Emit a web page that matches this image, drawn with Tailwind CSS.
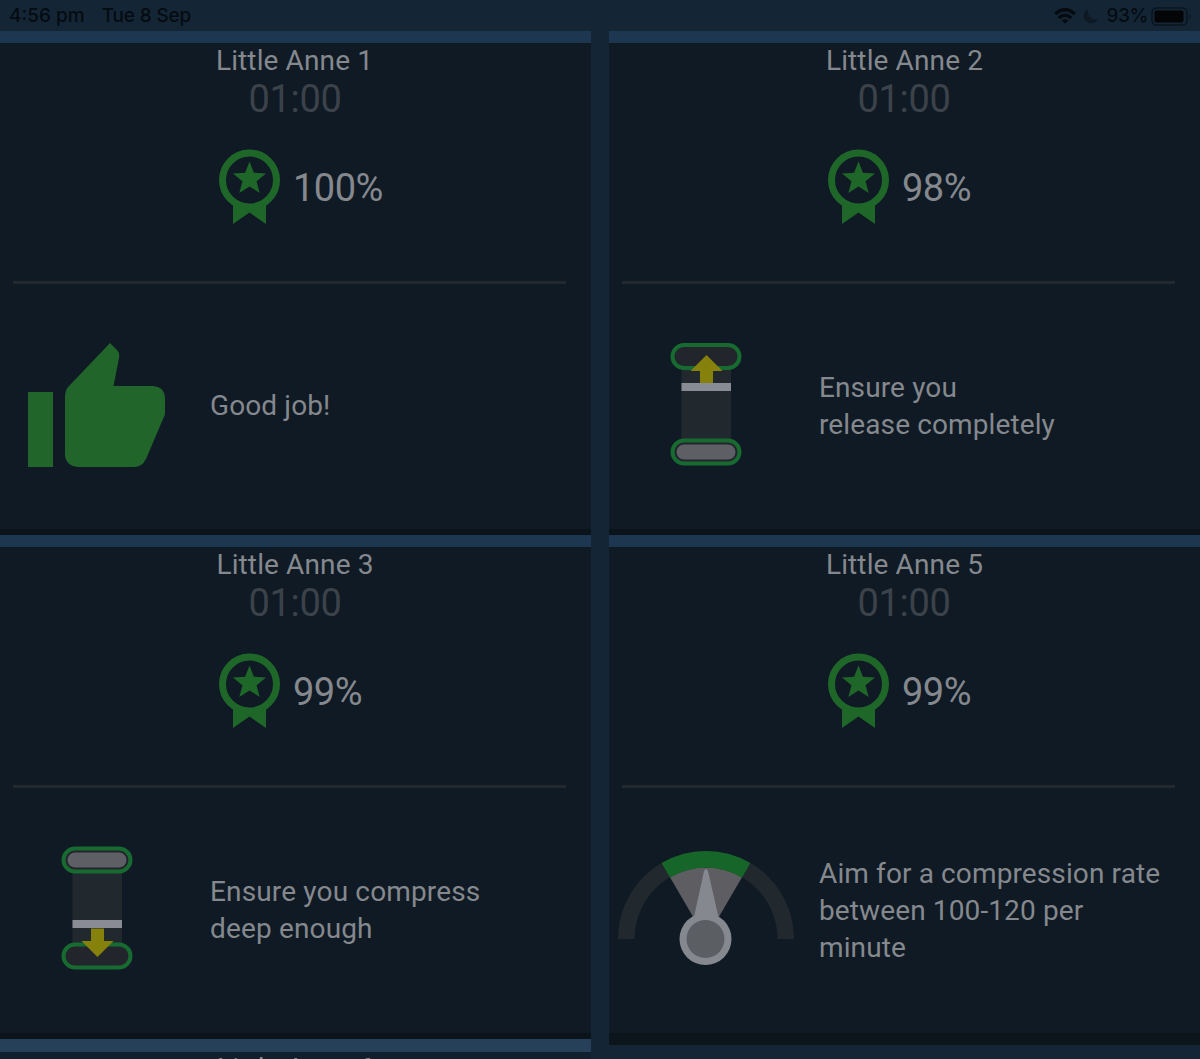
<!DOCTYPE html>
<html lang="en">
<head>
    <meta charset="UTF-8">
    <meta name="viewport" content="width=device-width, initial-scale=1.0">
    <title>CPR Results</title>
    <script src="https://cdn.jsdelivr.net/npm/@tailwindcss/browser@4"></script>
</head>
<body class="w-[1200px] h-[1059px] overflow-hidden bg-[#142635] text-[#85888d] font-['Roboto',sans-serif]">
    <!-- shared icons -->
    <svg class="hidden">
        <symbol id="award" viewBox="0 0 62 76">
            <path d="M14 52 H47 V75 L30.5 63.500 L14 75 Z" fill="#1f6729"/>
            <circle cx="30.500" cy="31" r="27" fill="#0f1a25" stroke="#1f6729" stroke-width="7"/>
            <path d="M30.500 12.500 L34.900 23.800 L47 24.500 L37.500 32.200 L40.700 44 L30.500 37.400 L20.300 44 L23.500 32.200 L14 24.500 L26.100 23.800 Z" fill="#1f6729"/>
        </symbol>
    </svg>

    <header class="h-[31px] pt-px flex items-center justify-between pl-[9px] pr-[8px] text-[19px] font-medium text-[#050b11] font-['Inter','Liberation_Sans',sans-serif]">
        <div class="flex gap-[17px]">
            <span>4:56 pm</span>
            <span class="tracking-[-0.15px]">Tue 8 Sep</span>
        </div>
        <div class="flex items-center">
            <svg class="w-[22px] h-[16px]" viewBox="0 0 22 16" fill="none" stroke="#050b11" stroke-width="3.500">
                <path d="M1.200 6 Q11 -2.800 20.800 6"/>
                <path d="M4.700 10 Q11 4.600 17.300 10"/>
                <path d="M11 15.500 L7.700 12.400 Q11 10 14.300 12.400 Z" fill="#050b11" stroke="none"/>
            </svg>
            <svg class="w-[16px] h-[16px] ml-[7px]" viewBox="0 0 16 16"><path d="M5 1 A7.500 7.500 0 1 0 15 11 A8 8 0 0 1 5 1 Z" fill="#0d1a24"/></svg>
            <span class="ml-[7px] tracking-[-0.4px]">93%</span>
            <svg class="w-[41px] h-[19px] ml-[3px]" viewBox="0 0 41 19">
                <rect x="1" y="1" width="35" height="17" rx="4.500" fill="none" stroke="#0a141d" stroke-width="1.500"/>
                <rect x="3.500" y="3.500" width="29" height="12" rx="2" fill="#040506"/>
                <path d="M38.500 6.500 Q40.500 9.500 38.500 12.500 Z" fill="#0a141d"/>
            </svg>
        </div>
    </header>

    <main class="grid grid-cols-2 gap-x-[18px]">
        <section class="h-[504px] flex flex-col bg-[#0f1a25] border-t-[12px] border-t-[#1c374f] border-b-[6px] border-b-[#0c141b]">
            <h2 class="pt-px h-[34px] leading-[34px] text-[28px] tracking-[0.12px] text-center pr-[2px]">Little Anne 1</h2>
            <p class="h-[44px] leading-[44px] text-[38px] tracking-[-0.3px] text-center text-[#3c4249] pr-[1px]">01:00</p>
            <div class="mt-[28px] pl-[219px] flex items-center h-[76px]">
                <svg class="w-[62px] h-[76px]"><use href="#award"/></svg>
                <span class="pt-[2px] ml-[12px] text-[38px] leading-[44px] tracking-[-0.5px]">100%</span>
            </div>
            <hr class="mt-[56px] ml-[13px] w-[553px] border-t-[3px] border-[#23282d]">
            <div class="flex-1 flex items-center pb-[3px]">
                <div class="w-[193px] flex justify-center">
                    <svg class="w-[138px] h-[125px]" viewBox="0 0 138 125" fill="#21652b">
                        <path d="M0 49 H25 V124 H0 Z"/>
                        <path d="M82 0 L89 7 Q92 10 91 15 L85.500 43 H125 Q137 44 137 56 V70 Q137 73 135 76 L118 116 Q114 124 106 124 H50 Q38 123 37 112 V54 Q37 46 42 42 Z"/>
                    </svg>
                </div>
                <p class="pl-[17px] text-[28px] leading-[37px] tracking-[0.12px]">Good job!</p>
            </div>
        </section>

        <section class="h-[504px] flex flex-col bg-[#0f1a25] border-t-[12px] border-t-[#1c374f] border-b-[6px] border-b-[#0c141b]">
            <h2 class="pt-px h-[34px] leading-[34px] text-[28px] tracking-[0.12px] text-center">Little Anne 2</h2>
            <p class="h-[44px] leading-[44px] text-[38px] tracking-[-0.3px] text-center text-[#3c4249] pr-[1px]">01:00</p>
            <div class="mt-[28px] pl-[219px] flex items-center h-[76px]">
                <svg class="w-[62px] h-[76px]"><use href="#award"/></svg>
                <span class="pt-[2px] ml-[12px] text-[38px] leading-[44px] tracking-[-0.5px]">98%</span>
            </div>
            <hr class="mt-[56px] ml-[13px] w-[553px] border-t-[3px] border-[#23282d]">
            <div class="flex-1 flex items-center pb-[1px]">
                <div class="w-[193px] flex justify-center pb-[4px]">
                    <svg class="w-[72px] h-[124px]" viewBox="0 0 72 124">
                        <rect x="11.500" y="22" width="49.500" height="78" fill="#22292e"/>
                        <rect x="2.500" y="3" width="67" height="23" rx="11.500" fill="#22262c" stroke="#176b30" stroke-width="4"/>
                        <rect x="11.500" y="41" width="49.500" height="8" fill="#898c94"/>
                        <path d="M36.500 13 L52.500 29 H43 V41 H30 V29 H20.500 Z" fill="#85810a"/>
                        <rect x="2.500" y="98.500" width="67" height="23" rx="11.500" fill="#22262c" stroke="#176b30" stroke-width="4"/>
                        <rect x="6.500" y="102.500" width="59" height="15" rx="7.500" fill="#5d5f65"/>
                    </svg>
                </div>
                <p class="pl-[17px] text-[28px] leading-[37px] tracking-[0.12px]">Ensure you<br>release completely</p>
            </div>
        </section>

        <section class="h-[504px] flex flex-col bg-[#0f1a25] border-t-[12px] border-t-[#1c374f] border-b-[6px] border-b-[#0c141b]">
            <h2 class="pt-px h-[34px] leading-[34px] text-[28px] tracking-[0.12px] text-center pr-[1px]">Little Anne 3</h2>
            <p class="h-[44px] leading-[44px] text-[38px] tracking-[-0.3px] text-center text-[#3c4249] pr-[1px]">01:00</p>
            <div class="mt-[28px] pl-[219px] flex items-center h-[76px]">
                <svg class="w-[62px] h-[76px]"><use href="#award"/></svg>
                <span class="pt-[2px] ml-[12px] text-[38px] leading-[44px] tracking-[-0.5px]">99%</span>
            </div>
            <hr class="mt-[56px] ml-[13px] w-[553px] border-t-[3px] border-[#23282d]">
            <div class="flex-1 flex items-center pb-[1px]">
                <div class="w-[193px] flex justify-center pb-[4px]">
                    <svg class="w-[72px] h-[124px]" viewBox="0 0 72 124">
                        <rect x="11.500" y="24" width="49.500" height="76" fill="#22292e"/>
                        <rect x="2.500" y="2.500" width="67" height="23" rx="11.500" fill="#22262c" stroke="#176b30" stroke-width="4"/>
                        <rect x="6.500" y="6.500" width="59" height="15" rx="7.500" fill="#5d5f65"/>
                        <rect x="2.500" y="98.500" width="67" height="23" rx="11.500" fill="#22262c" stroke="#176b30" stroke-width="4"/>
                        <rect x="11.500" y="74" width="49.500" height="8" fill="#898c94"/>
                        <path d="M36.500 111 L52.500 95 H43 V82.500 H30 V95 H20.500 Z" fill="#85810a"/>
                    </svg>
                </div>
                <p class="pl-[17px] text-[28px] leading-[37px] tracking-[0.15px]">Ensure you compress<br>deep enough</p>
            </div>
        </section>

        <section class="h-[510px] flex flex-col bg-[#0f1a25] border-t-[12px] border-t-[#1c374f] border-b-[12px] border-b-[#0d151c]">
            <h2 class="pt-px h-[34px] leading-[34px] text-[28px] tracking-[0.12px] text-center">Little Anne 5</h2>
            <p class="h-[44px] leading-[44px] text-[38px] tracking-[-0.3px] text-center text-[#3c4249] pr-[1px]">01:00</p>
            <div class="mt-[28px] pl-[219px] flex items-center h-[76px]">
                <svg class="w-[62px] h-[76px]"><use href="#award"/></svg>
                <span class="pt-[2px] ml-[12px] text-[38px] leading-[44px] tracking-[-0.5px]">99%</span>
            </div>
            <hr class="mt-[56px] ml-[13px] w-[553px] border-t-[3px] border-[#23282d]">
            <div class="flex-1 flex items-center pb-[1px]">
                <div class="w-[193px] flex justify-center pb-[4px]">
                    <svg class="w-[176px] h-[115px]" viewBox="0 0 176 115">
                        <path d="M0 88 A88 88 0 0 1 176 88 H159.500 A71.500 71.500 0 0 0 16.500 88 Z" fill="#22292e"/>
                        <path d="M88 88 L52 26.200 A71.500 71.500 0 0 1 124 26.200 Z" fill="#5d5d62"/>
                        <path d="M43.600 12.100 A88 88 0 0 1 132.400 12.100 L124 26.500 A71.500 71.500 0 0 0 52 26.500 Z" fill="#16662a"/>
                        <path d="M76 66 L86 20 Q88 16 90 20 L100.500 66 Z" fill="#85888e"/>
                        <circle cx="87.500" cy="88" r="26" fill="#85888e"/>
                        <circle cx="87.500" cy="88" r="19" fill="#5b5f64"/>
                    </svg>
                </div>
                <p class="pl-[17px] text-[28px] leading-[37px] tracking-[0.12px]">Aim for a compression rate<br>between 100-120 per<br>minute</p>
            </div>
        </section>

        <!-- next row, cut off by the screen edge -->
        <section class="-mt-[6px] h-[60px] bg-[#11202f] border-t-[13px] border-t-[#274059]">
            <h2 class="h-[34px] leading-[34px] text-[28px] tracking-[0.12px] text-center">Little Anne 6</h2>
        </section>
    </main>
</body>
</html>
